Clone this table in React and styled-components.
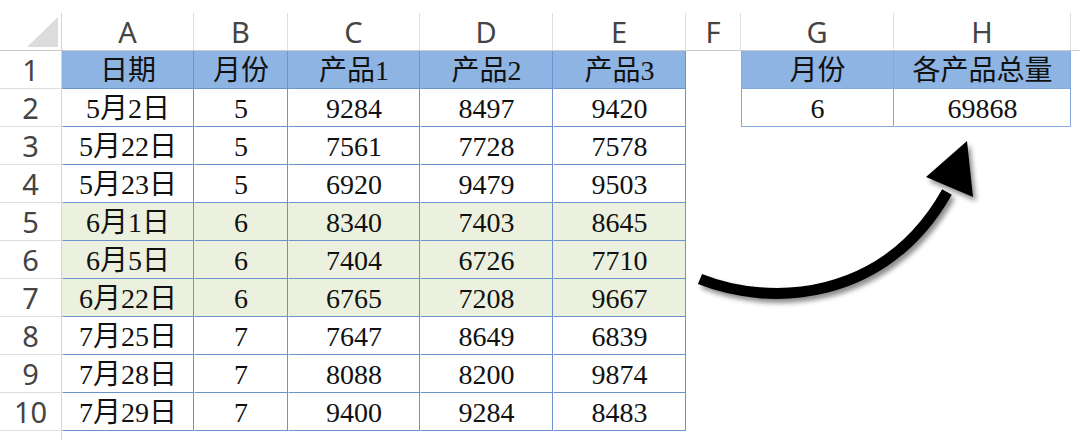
import React from "react";
import styled, { createGlobalStyle } from "styled-components";

const GlobalStyle = createGlobalStyle`
  html, body { margin: 0; padding: 0; background: #ffffff; overflow: hidden; }
  body { width: 1080px; height: 440px; }
`;

const COLS = ["A", "B", "C", "D", "E", "F", "G", "H", ""];

const rows = [
  ["5月2日", "5", "9284", "8497", "9420"],
  ["5月22日", "5", "7561", "7728", "7578"],
  ["5月23日", "5", "6920", "9479", "9503"],
  ["6月1日", "6", "8340", "7403", "8645"],
  ["6月5日", "6", "7404", "6726", "7710"],
  ["6月22日", "6", "6765", "7208", "9667"],
  ["7月25日", "7", "7647", "8649", "6839"],
  ["7月28日", "7", "8088", "8200", "9874"],
  ["7月29日", "7", "9400", "9284", "8483"],
];

const Page = styled.div`
  position: relative;
  width: 1080px;
  height: 440px;
  overflow: hidden;
  padding-top: 13px;
  box-sizing: border-box;
`;

const Sheet = styled.div`
  display: grid;
  grid-template-columns: 62px 132px 94px 132px 133px 133px 55px 153px 177px 1fr;
  grid-auto-rows: 38px;
`;

const Corner = styled.div`
  position: relative;
  border-right: 1px solid #d4d4d4;
  border-bottom: 1px solid #c9c9c9;
  box-sizing: border-box;
  &::after {
    content: "";
    position: absolute;
    right: 3px;
    bottom: 3px;
    width: 31px;
    height: 30px;
    background: #dcdcdc;
    clip-path: polygon(100% 0, 100% 100%, 0 100%);
  }
`;

const ColHead = styled.div`
  display: flex;
  align-items: center;
  justify-content: center;
  box-sizing: border-box;
  border-right: 1px solid ${(p) => (p.$last ? "transparent" : "#dedede")};
  border-bottom: 1px solid #c9c9c9;
  font-family: "Noto Sans", "Open Sans", sans-serif;
  font-size: 29px;
  color: #444444;
  line-height: 1;
`;

const RowHead = styled.div`
  display: flex;
  align-items: flex-start;
  justify-content: center;
  padding-top: 4px;
  box-sizing: border-box;
  border-right: 1px solid #d4d4d4;
  border-bottom: 1px solid #dedede;
  font-family: "Noto Sans", "Open Sans", sans-serif;
  font-size: 29px;
  color: #444444;
  line-height: 1;
`;

const Cell = styled.div`
  display: flex;
  align-items: center;
  justify-content: center;
  box-sizing: border-box;
  padding-top: 2px;
  background: ${(p) => (p.$head ? "#8db4e2" : p.$shade ? "#ebf1de" : "#ffffff")};
  border-right: 1px solid ${(p) => p.$line || "transparent"};
  border-bottom: 1px solid ${(p) => p.$line || "transparent"};
  border-left: 1px solid ${(p) => p.$leftLine || "transparent"};
  font-family: "Liberation Serif", "Noto Sans CJK SC", serif;
  font-size: 28px;
  font-weight: 400;
  color: #111111;
  line-height: 1;
  white-space: nowrap;
`;

const Overlay = styled.svg`
  position: absolute;
  left: 0;
  top: 0;
  width: 1080px;
  height: 440px;
  pointer-events: none;
`;

const MAIN = "#6b93cd";
const SIDE = "#86a8da";

function Arrow() {
  return (
    <Overlay viewBox="0 0 1080 440">
      <defs>
        <filter id="shadow" x="-20%" y="-20%" width="140%" height="140%">
          <feDropShadow dx="3" dy="4" stdDeviation="2.5" floodColor="#000" floodOpacity="0.45" />
        </filter>
      </defs>
      <g filter="url(#shadow)">
        <path
          d="M 700 279 C 770 307 885 302 947 192"
          fill="none"
          stroke="#000"
          strokeWidth="11"
        />
        <polygon points="926,177 967,141 973,197" fill="#000" />
      </g>
    </Overlay>
  );
}

export default function App() {
  return (
    <>
      <GlobalStyle />
      <Page>
        <Sheet>
          <Corner />
          {COLS.map((c, i) => (
            <ColHead key={i} $last={i === COLS.length - 1}>
              {c}
            </ColHead>
          ))}

          <RowHead>1</RowHead>
          {["日期", "月份", "产品1", "产品2", "产品3"].map((t) => (
            <Cell key={t} $head $line={MAIN}>
              {t}
            </Cell>
          ))}
          <Cell />
          <Cell $head $line={SIDE} $leftLine={SIDE}>月份</Cell>
          <Cell $head $line={SIDE}>各产品总量</Cell>
          <Cell />

          {rows.map((r, ri) => {
            const n = ri + 2;
            const shade = r[1] === "6";
            return (
              <React.Fragment key={n}>
                <RowHead>{n}</RowHead>
                {r.map((v, ci) => (
                  <Cell key={ci} $shade={shade} $line={MAIN}>
                    {v}
                  </Cell>
                ))}
                <Cell />
                {n === 2 ? (
                  <>
                    <Cell $line={SIDE} $leftLine={SIDE}>6</Cell>
                    <Cell $line={SIDE}>69868</Cell>
                  </>
                ) : (
                  <>
                    <Cell />
                    <Cell />
                  </>
                )}
                <Cell />
              </React.Fragment>
            );
          })}
          <RowHead>11</RowHead>
        </Sheet>
        <Arrow />
      </Page>
    </>
  );
}
